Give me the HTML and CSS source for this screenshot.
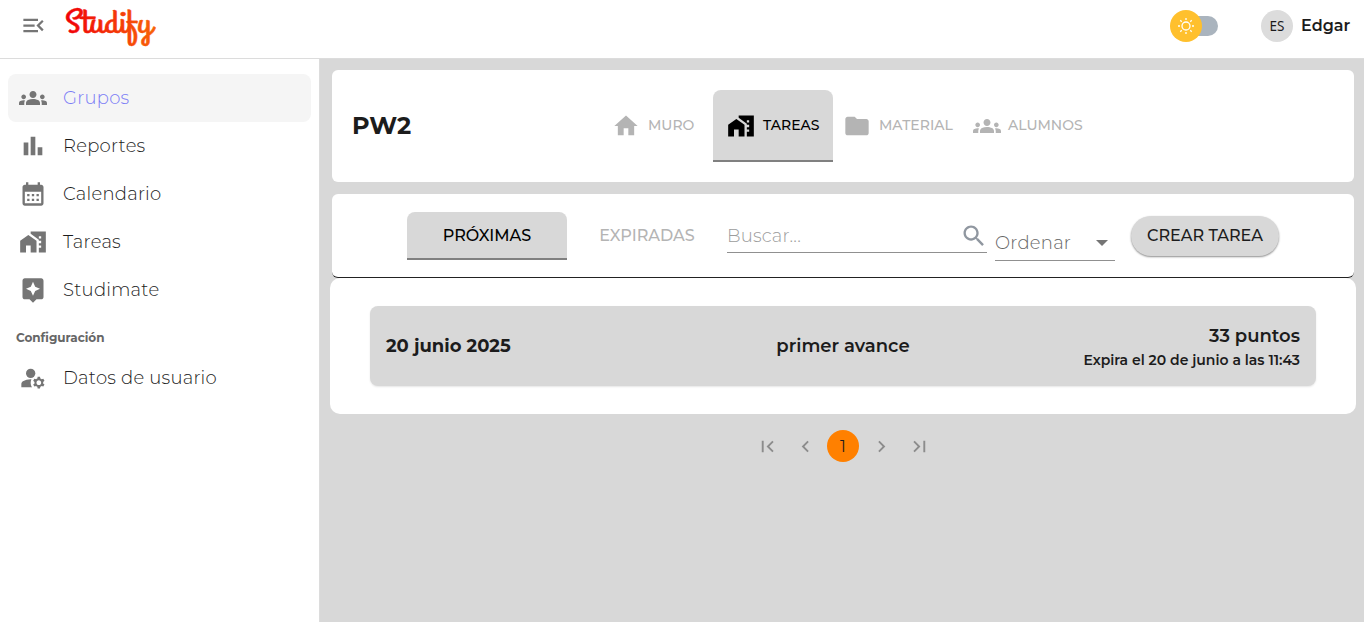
FILE: index.html
```html
<!DOCTYPE html>
<html lang="es">
<head>
<meta charset="utf-8">
<title>Studify</title>
<link rel="stylesheet" href="styles.css">
</head>
<body>
<svg class="sprite" aria-hidden="true">
  <symbol id="i-groups" viewBox="0 0 24 24"><path d="M12 12.75c1.63 0 3.07.39 4.24.9 1.08.48 1.76 1.56 1.76 2.73V18H6v-1.61c0-1.18.68-2.26 1.76-2.73 1.17-.52 2.61-.91 4.24-.91zM4 13c1.1 0 2-.9 2-2s-.9-2-2-2-2 .9-2 2 .9 2 2 2zm1.13 1.1c-.37-.06-.74-.1-1.13-.1-.99 0-1.93.21-2.78.58C.48 14.9 0 15.62 0 16.43V18h4.5v-1.61c0-.83.23-1.61.63-2.29zM20 13c1.1 0 2-.9 2-2s-.9-2-2-2-2 .9-2 2 .9 2 2 2zm4 3.43c0-.81-.48-1.53-1.22-1.85-.85-.37-1.79-.58-2.78-.58-.39 0-.76.04-1.13.1.4.68.63 1.46.63 2.29V18H24v-1.57zM12 6c1.66 0 3 1.34 3 3s-1.34 3-3 3-3-1.34-3-3 1.34-3 3-3z"/></symbol>
  <symbol id="i-work" viewBox="0 0 24 24"><path d="M1 11v10h5v-6h4v6h5V11L8 6z"/><path d="M10 3v1.97l7 5V11h2v2h-2v2h2v2h-2v4h6V3H10zm9 6h-2V7h2v2z"/></symbol>
</svg>

<header class="topbar">
  <svg class="menu-icon" viewBox="0 0 24 24"><path d="M3 18h13v-2H3v2zm0-5h10v-2H3v2zm0-7v2h13V6H3zm18 9.59L17.42 12 21 8.41 19.59 7l-5 5 5 5L21 15.59z"/></svg>
  <svg class="logo" viewBox="0 0 100 50">
    <defs><linearGradient id="flame" x1="0" x2="1"><stop offset="0" stop-color="#f00008"/><stop offset="1" stop-color="#f86408"/></linearGradient></defs>
    <text class="logo-text" x="5" y="31" textLength="87" lengthAdjust="spacingAndGlyphs" fill="url(#flame)">Studify</text>
  </svg>
  <div class="switch">
    <span class="switch-thumb">
      <svg viewBox="0 0 20 20"><circle cx="10" cy="10" r="4"/><path d="M10 2v2M10 16v2M2 10h2M16 10h2M4.3 4.3l1.4 1.4M14.3 14.3l1.4 1.4M4.3 15.7l1.4-1.4M14.3 5.7l1.4-1.4"/></svg>
    </span>
  </div>
  <span class="avatar"><span>ES</span></span>
  <span class="user">Edgar</span>
</header>

<div class="shell">
  <nav class="sidebar">
    <a class="item active"><svg><use href="#i-groups"/></svg><span>Grupos</span></a>
    <a class="item"><svg viewBox="0 0 24 24"><path d="M4 9h4v11H4zm12 4h4v7h-4zm-6-9h4v16h-4z"/></svg><span>Reportes</span></a>
    <a class="item"><svg viewBox="0 0 24 24"><path d="M19 4h-1V2h-2v2H8V2H6v2H5c-1.11 0-1.99.9-1.99 2L3 20c0 1.1.89 2 2 2h14c1.1 0 2-.9 2-2V6c0-1.1-.9-2-2-2zm0 16H5V10h14v10zM9 14H7v-2h2v2zm4 0h-2v-2h2v2zm4 0h-2v-2h2v2zm-8 4H7v-2h2v2zm4 0h-2v-2h2v2zm4 0h-2v-2h2v2z"/></svg><span>Calendario</span></a>
    <a class="item"><svg><use href="#i-work"/></svg><span>Tareas</span></a>
    <a class="item"><svg viewBox="0 0 24 24"><path d="M19 2H5c-1.11 0-2 .9-2 2v14c0 1.1.89 2 2 2h4l3 3 3-3h4c1.1 0 2-.9 2-2V4c0-1.1-.9-2-2-2zm-5.12 10.88L12 17l-1.88-4.12L6 11l4.12-1.88L12 5l1.88 4.12L18 11l-4.12 1.88z"/></svg><span>Studimate</span></a>
    <div class="section">Configuración</div>
    <a class="item"><svg viewBox="0 0 24 24"><circle cx="10" cy="8" r="4"/><path d="M10.67 13.02c-.22-.01-.44-.02-.67-.02-2.42 0-4.68.67-6.61 1.82-.88.52-1.39 1.5-1.39 2.53V20h9.26c-.79-1.13-1.26-2.51-1.26-4 0-1.07.25-2.07.67-2.98zM20.75 16c0-.22-.03-.42-.06-.63l1.14-1.01-1-1.73-1.45.49c-.32-.27-.68-.48-1.08-.63L18 11h-2l-.3 1.49c-.4.15-.76.36-1.08.63l-1.45-.49-1 1.73 1.14 1.01c-.03.21-.06.41-.06.63s.03.42.06.63l-1.14 1.01 1 1.73 1.45-.49c.32.27.68.48 1.08.63L16 21h2l.3-1.49c.4-.15.76-.36 1.08-.63l1.45.49 1-1.73-1.14-1.01c.03-.21.06-.41.06-.63zM17 18c-1.1 0-2-.9-2-2s.9-2 2-2 2 .9 2 2-.9 2-2 2z"/></svg><span>Datos de usuario</span></a>
  </nav>

  <main class="main">
    <section class="card course">
      <h1>PW2</h1>
      <div class="tabs">
        <a class="tab muro"><svg viewBox="0 0 24 24"><path d="M10 20v-6h4v6h5v-8h3L12 3 2 12h3v8z"/></svg><span>MURO</span></a>
        <a class="tab selected"><svg><use href="#i-work"/></svg><span>TAREAS</span></a>
        <a class="tab"><svg viewBox="0 0 24 24"><path d="M10 4H4c-1.1 0-1.99.9-1.99 2L2 18c0 1.1.9 2 2 2h16c1.1 0 2-.9 2-2V8c0-1.1-.9-2-2-2h-8l-2-2z"/></svg><span>MATERIAL</span></a>
        <a class="tab alumnos"><svg><use href="#i-groups"/></svg><span>ALUMNOS</span></a>
      </div>
    </section>

    <section class="card filters">
      <a class="filter selected"><span>PRÓXIMAS</span></a>
      <a class="filter"><span>EXPIRADAS</span></a>
      <div class="search"><span>Buscar...</span>
        <svg viewBox="0 0 24 24"><path d="M15.5 14h-.79l-.28-.27C15.41 12.59 16 11.11 16 9.5 16 5.91 13.09 3 9.5 3S3 5.91 3 9.5 5.91 16 9.5 16c1.61 0 3.09-.59 4.23-1.57l.27.28v.79l5 4.99L20.49 19l-4.99-5zm-6 0C7.01 14 5 11.99 5 9.5S7.01 5 9.5 5 14 7.01 14 9.5 11.99 14 9.5 14z"/></svg>
      </div>
      <div class="select"><span>Ordenar</span><svg viewBox="0 0 12 6"><path d="M0 0h12L6 6z"/></svg></div>
      <button class="create">CREAR TAREA</button>
    </section>

    <section class="list">
      <article class="task">
        <span class="date">20 junio 2025</span>
        <span class="title">primer avance</span>
        <div class="meta"><span class="points">33 puntos</span><span class="due">Expira el 20 de junio a las 11:43</span></div>
      </article>
    </section>

    <div class="pager">
      <span class="page"><svg viewBox="0 0 24 24"><path d="M18.41 16.59L13.82 12l4.59-4.59L17 6l-6 6 6 6zM6 6h2v12H6z"/></svg></span>
      <span class="page"><svg viewBox="0 0 24 24"><path d="M15.41 7.41L14 6l-6 6 6 6 1.41-1.41L10.83 12z"/></svg></span>
      <span class="page current">1</span>
      <span class="page"><svg viewBox="0 0 24 24"><path d="M10 6L8.59 7.41 13.17 12l-4.58 4.59L10 18l6-6z"/></svg></span>
      <span class="page"><svg viewBox="0 0 24 24"><path d="M5.59 7.41L10.18 12l-4.59 4.59L7 18l6-6-6-6zM16 6h2v12h-2z"/></svg></span>
    </div>
  </main>
</div>
</body>
</html>
```

FILE: styles.css
```css
* { box-sizing: border-box; }
body {
  margin: 0;
  height: 622px;
  overflow: hidden;
  display: flex;
  flex-direction: column;
  font-family: Montserrat, Inter, "Open Sans", sans-serif;
  color: #1c1c1c;
  background: #d8d8d8;
}
svg { display: block; flex: none; fill: currentColor; }
span { white-space: nowrap; }
.sprite { display: none; }

.topbar {
  flex: none;
  height: 59px;
  padding: 0 14px 7px 20px;
  display: flex;
  align-items: center;
  background: #fff;
  border-bottom: 1px solid #dcdcdc;
}
.menu-icon { width: 27px; height: 27px; color: #757575; }
.logo { width: 100px; height: 50px; margin-left: 13px; overflow: visible; }
.logo-text {
  font: italic 400 33px "Grand Hotel", Courgette, "Oleo Script", "Dancing Script", "Liberation Serif", cursive;
  font-style: oblique 6deg;
  stroke: url(#flame);
  stroke-width: .4;
}
.switch {
  margin-left: auto;
  width: 48px;
  height: 32px;
  position: relative;
}
.switch::before {
  content: "";
  position: absolute;
  inset: 6px 0 6px 8px;
  border-radius: 10px;
  background: #aab4be;
}
.switch-thumb {
  position: relative;
  width: 32px;
  height: 32px;
  border-radius: 50%;
  background: #ffc02d;
  display: grid;
  place-items: center;
}
.switch-thumb svg { width: 20px; height: 20px; fill: none; stroke: #fff; stroke-width: 1.3; }
.avatar {
  width: 32px;
  height: 32px;
  margin-left: 43px;
  border-radius: 50%;
  background: #dcdcdc;
  display: grid;
  place-items: center;
  font: 13.5px "Noto Sans", sans-serif;
}
.user { margin-left: 8px; width: 49px; font-size: 16px; font-weight: 600; }

.shell { flex: 1; display: flex; min-height: 0; }
.sidebar { width: 320px; padding: 15px 8px; background: #fff; border-right: 1px solid #dcdcdc; }
.item {
  height: 48px;
  padding-left: 11px;
  display: flex;
  align-items: center;
  gap: 16px;
  border-radius: 8px;
  font-size: 18px;
  font-weight: 350;
  letter-spacing: .24px;
}
.item svg { width: 28px; height: 28px; color: #757575; }
.item.active { background: #f5f5f5; color: #7b7cf5; }
.section { height: 40px; padding: 4px 8px; line-height: 40px; font-size: 12px; font-weight: 700; color: #666; }

.main { flex: 1; padding: 11px 8px 0 10px; display: flex; flex-direction: column; }
.card { margin: 0 2px; background: #fff; border-radius: 6px; display: flex; }
.course { height: 112px; padding: 20px 0 0 20px; }
.course h1 { margin: 0; width: 241px; line-height: 72px; font-size: 24px; font-weight: 700; }
.tabs { display: grid; grid-template-columns: 120px 120px 130px 130px; height: 72px; }
.tab {
  display: flex;
  align-items: center;
  gap: 8px;
  padding-left: 10px;
  font-size: 14px;
  font-weight: 500;
  color: #b4b4b4;
}
.tab svg { width: 28px; height: 28px; }
.tab span { padding-bottom: 2px; }
.tab.muro { padding-left: 19px; }
.tab.alumnos { gap: 7px; }
.tab.selected { padding-left: 14px; }
.selected {
  color: #000;
  background: linear-gradient(#808080, #808080) bottom / 100% 2px no-repeat, #d8d8d8;
  border-radius: 8px 8px 0 0;
}
.filters { height: 84px; margin-top: 12px; padding: 18px 0 0 75px; border-bottom: 1px solid #222; }
.filter { width: 160px; height: 48px; padding-bottom: 2px; display: grid; place-items: center; font-size: 16px; font-weight: 500; color: #b4b4b4; }
.filter.selected { color: #000; }
.search {
  width: 260px;
  height: 41px;
  border-bottom: 1px solid #909090;
  display: flex;
  align-items: center;
  justify-content: space-between;
  padding-top: 7px;
  font-size: 18px;
  font-weight: 350;
  letter-spacing: .17px;
  color: #9c9c9c;
}
.search svg { width: 28px; height: 28px; margin-right: -1px; color: #9097a0; }
.select {
  width: 120px;
  height: 49px;
  margin-left: 8px;
  padding: 14px 7px 0 0;
  border-bottom: 1px solid #909090;
  display: flex;
  align-items: center;
  justify-content: space-between;
  font-size: 18px;
  font-weight: 350;
  letter-spacing: .24px;
  color: #666;
}
.select svg { width: 12px; height: 6px; color: #757575; }
.create {
  width: 148px;
  height: 40px;
  margin: 4px 0 0 16px;
  padding: 0 0 1px;
  border: 0;
  border-radius: 20px;
  background: #d8d8d8;
  box-shadow: 0 1px 2px rgba(0, 0, 0, .45);
  font: 500 16px Montserrat, Inter, sans-serif;
  color: #1c1c1c;
}
.list { height: 136px; padding: 28px 40px; background: #fff; border-radius: 10px; }
.task {
  height: 80px;
  padding: 0 16px;
  border-radius: 8px;
  background: #d8d8d8;
  box-shadow: 0 1px 2px rgba(0, 0, 0, .1);
  display: grid;
  grid-template-columns: 1fr 1fr 1fr;
  align-items: center;
  font-size: 18px;
}
.date { font-weight: 700; }
.title { font-weight: 600; text-align: center; }
.meta { padding-top: 4px; display: flex; flex-direction: column; align-items: flex-end; }
.points { font-weight: 600; line-height: 25px; }
.due { font-size: 14px; font-weight: 600; line-height: 23px; }
.pager { margin-top: 16px; display: flex; justify-content: center; gap: 6px; }
.page { width: 32px; height: 32px; display: grid; place-items: center; color: #8c8c8c; font-size: 16px; }
.page svg { width: 23px; height: 23px; }
.page.current { border-radius: 50%; background: #ff8000; color: #1c1c1c; }
```
